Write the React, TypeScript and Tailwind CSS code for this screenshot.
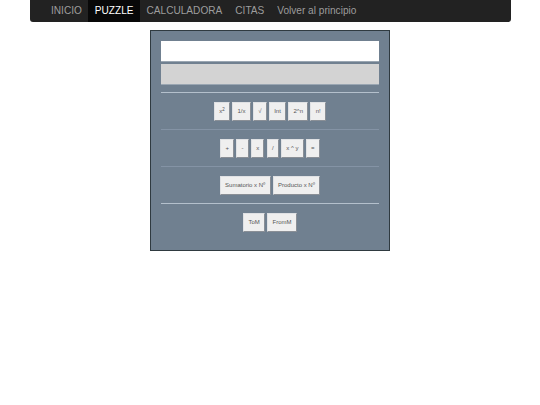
import React from "react";

function Btn({ children }: { children: React.ReactNode }) {
  return (
    <button className="h-[19px] px-[4.2px] bg-[#efefef] border-b border-r border-[#8a8f96] border-t-[#dfe1e4] border-l-[#dfe1e4] border text-[#555] text-[6px] leading-none font-['Liberation_Sans',sans-serif] whitespace-nowrap">
      {children}
    </button>
  );
}

function Row({ items }: { items: React.ReactNode[] }) {
  return (
    <div className="h-[36px] flex items-center justify-center gap-[2.3px]">
      {items.map((t, i) => (
        <Btn key={i}>{t}</Btn>
      ))}
    </div>
  );
}

function Hr({ strong }: { strong?: boolean }) {
  return <div className={strong ? "h-px bg-[#b4c0cc]" : "h-px bg-[#8493a5]"} />;
}

export default function App() {
  return (
    <div className="w-[540px] h-[405px] bg-white font-['Liberation_Sans',sans-serif] overflow-hidden">
      <nav className="ml-[29.5px] w-[481px] h-[22px] bg-[#222222] rounded-b-[3px] flex pl-[15px] text-[10.1px] text-[#9d9d9d]">
        <a className="px-[6.5px] leading-[21px]">INICIO</a>
        <a className="px-[6.5px] leading-[21px] bg-[#080808] text-white">PUZZLE</a>
        <a className="px-[6.5px] leading-[21px]">CALCULADORA</a>
        <a className="px-[6.5px] leading-[21px]">CITAS</a>
        <a className="px-[6.5px] leading-[21px]">Volver al principio</a>
      </nav>
      <div className="mt-[8px] mx-auto w-[240px] h-[221px] bg-[#708090] border border-[#2f3a40] px-[10px] pt-[10px]">
        <div className="h-[21px] bg-white border-b border-[#9aa6b2]" />
        <div className="mt-[1.5px] h-[21px] bg-[#d3d3d3] border-b border-[#9aa6b2]" />
        <div className="mt-[7.5px]">
          <Hr strong />
          <Row items={[<>x<sup className="text-[4.5px]">2</sup></>, "1/x", "√", "Int", "2^n", "n!"]} />
          <Hr />
          <Row items={["+", "-", "x", "/", "x ^ y", "="]} />
          <Hr />
          <Row items={["Sumatorio x Nº", "Producto x Nº"]} />
          <Hr strong />
          <Row items={["ToM", "FromM"]} />
        </div>
      </div>
    </div>
  );
}
